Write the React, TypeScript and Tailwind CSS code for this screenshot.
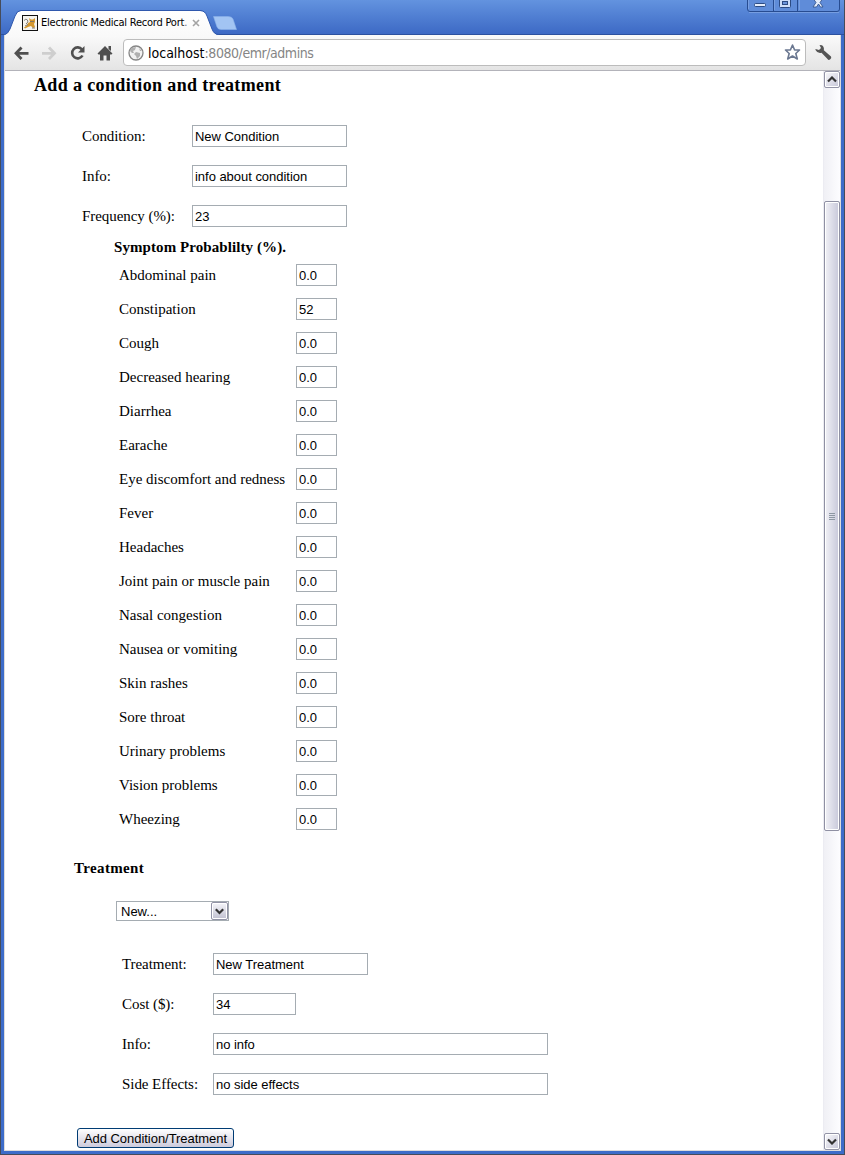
import React from "react";

const symptoms: [string, string][] = [
  ["Abdominal pain", "0.0"],
  ["Constipation", "52"],
  ["Cough", "0.0"],
  ["Decreased hearing", "0.0"],
  ["Diarrhea", "0.0"],
  ["Earache", "0.0"],
  ["Eye discomfort and redness", "0.0"],
  ["Fever", "0.0"],
  ["Headaches", "0.0"],
  ["Joint pain or muscle pain", "0.0"],
  ["Nasal congestion", "0.0"],
  ["Nausea or vomiting", "0.0"],
  ["Skin rashes", "0.0"],
  ["Sore throat", "0.0"],
  ["Urinary problems", "0.0"],
  ["Vision problems", "0.0"],
  ["Wheezing", "0.0"],
];

function Field({ value, width }: { value: string; width: string }) {
  return (
    <input
      defaultValue={value}
      className={`${width} block h-[22px] shrink-0 border border-[#a5acb2] bg-white px-[2px] pt-px font-['Liberation_Sans',sans-serif] text-[13px] leading-[18px] tracking-[-0.03px] text-black outline-none`}
    />
  );
}

function Row({ label, value, labelWidth, width }: { label: string; value: string; labelWidth: string; width: string }) {
  return (
    <label className="flex h-10 items-start">
      <span className={`${labelWidth} shrink-0 whitespace-nowrap leading-[22px] tracking-[-0.06px]`}>{label}</span>
      <Field value={value} width={width} />
    </label>
  );
}

function TabStrip() {
  return (
    <div className="relative h-[35px] shrink-0 bg-linear-to-b from-[#6393df] to-[#3c68c4] shadow-[inset_0_-1px_0_#2c519f]">
      <svg className="absolute -left-px top-0" width="245" height="36" viewBox="0 0 245 36">
        <defs>
          <linearGradient id="tab" x1="0" y1="0" x2="0" y2="1">
            <stop offset="0" stopColor="#ffffff" />
            <stop offset="1" stopColor="#f9f9f9" />
          </linearGradient>
        </defs>
        <path d="M4 36V35Q8 34 10 29L15 16Q17 11 21 11H200Q205 11 207 16L212 29Q214 35 219 35V36Z" fill="url(#tab)" />
        <path d="M4 35Q8 34 10 29L15 16Q17 10.500 21 10.500H200Q205 10.500 207 16L212 29Q214 34.500 219 34.500" fill="none" stroke="#2f58ad" strokeWidth="1" />
        <path d="M213.500 16.500H228Q232 16.500 233 19L236.500 29.500H221Q218 29.500 217 27Z" fill="#a2c4f3" stroke="#8bb2ea" strokeWidth=".6" />
      </svg>
      <div className="relative flex h-6 translate-y-[11px] items-center pl-[21px]">
        <svg width="16" height="16" viewBox="0 0 16 16" className="shrink-0">
          <rect x=".5" y=".5" width="15" height="15" fill="#f6f4ee" stroke="#111" />
          <path d="M7 3L9 4.500H11L13 3V7L12 9L13 12L11 13L9 11L6 12L3 13.500L2 12.500L5 10.500L6 8L8 7Z" fill="#d5982f" />
          <path d="M2 5.500Q4 3 5.500 5T4 9M3 11L6 9.500M10 13H13M8 6.500H12" fill="none" stroke="#77716a" strokeWidth=".9" />
        </svg>
        <span className="ml-[3px] w-[147px] overflow-hidden whitespace-nowrap pt-px font-['DejaVu_Sans_Condensed','DejaVu_Sans',sans-serif] text-[11px] tracking-[-0.22px] text-black [font-stretch:condensed]">
          Electronic Medical Record Port<span className="text-gray-500">.</span>
        </span>
        <svg className="ml-[4px]" width="8" height="8" viewBox="0 0 8 8">
          <path d="M1 1L7 7M7 1L1 7" stroke="#a4a4a4" strokeWidth="1.600" />
        </svg>
      </div>
      <svg className="absolute -right-px top-0" width="98" height="13" viewBox="0 0 98 13">
        <path d="M.5 0V9Q.5 11.500 3 11.500H90Q92.500 11.500 92.500 9V0" fill="#5f8cd9" stroke="#274c91" />
        <path d="M1.500 0V9M27.500 0V10M52.500 0V10M2 12.500H92" stroke="#85a9e5" strokeWidth=".7" />
        <path d="M26.500 0V11M50.500 0V11" stroke="#274c91" />
        <rect x="7.500" y="3.500" width="11" height="3" rx="1" fill="#e3ecfb" stroke="#2c4b83" />
        <rect x="32.500" y="-2.500" width="11" height="10" rx="1" fill="#cfdffa" stroke="#2c4b83" />
        <rect x="35.500" y="1.500" width="5" height="3" fill="#6c95dc" stroke="#2c4b83" />
        <path d="M67.500 -1L70 2.500L67 7H70.500L72.500 4L74.500 7H77L74 2.500L76.500 -1Z" fill="#e3ecfb" stroke="#2c4b83" strokeWidth=".8" transform="translate(-1 0)" />
      </svg>
    </div>
  );
}

function Toolbar() {
  return (
    <div className="flex h-9 shrink-0 items-center border-b border-[#b3b3ba] bg-linear-to-b from-[#fafafa] to-[#e4e4e4] pl-2">
      <svg width="105" height="24" viewBox="0 0 105 24" className="shrink-0">
        <path d="M15.500 12.300H4M8.500 6.500L3 12.300L8.500 18" fill="none" stroke="#4f4f4f" strokeWidth="2.800" />
        <path d="M29 12.300H40M36 6.500L41.500 12.300L36 18" fill="none" stroke="#cecece" strokeWidth="2.800" />
        <path d="M69 8.500A5.500 5.500 0 1 0 69.500 14.500" fill="none" stroke="#4f4f4f" strokeWidth="2.600" />
        <path d="M71.500 5V11.500H65Z" fill="#4f4f4f" />
        <path d="M84.500 12.500L92 5L99.500 12.500L98.500 13.500H97V19.500H93.500V14.500H90.500V19.500H87V13.500H85.500ZM95.500 5H98V10L95.500 8Z" fill="#4f4f4f" />
      </svg>
      <div className="ml-[5px] flex h-[27px] w-[683px] shrink-0 items-center rounded-[4px] border border-[#bcbcbc] bg-white pl-[4px] pr-[4px]">
        <svg width="16" height="16" viewBox="0 0 16 16" className="shrink-0">
          <circle cx="8" cy="8" r="7" fill="#f2f2f2" stroke="#858585" strokeWidth="1.300" />
          <path d="M3 3L8 2L7 5L5 6L6 8L4 8L2 6ZM8 7L12 8L12 11L9 14L8 11L6 9ZM11 3L14 6L12 6Z" fill="#b0b0b0" />
        </svg>
        <span className="ml-[4px] whitespace-nowrap font-['DejaVu_Sans_Condensed','DejaVu_Sans',sans-serif] text-[14px] leading-5 tracking-[-0.45px] text-[#858585] [font-stretch:condensed]">
          <span className="tracking-[0px] text-black">localhost</span>:8080/emr/admins
        </span>
        <svg width="17" height="17" viewBox="0 0 17 17" className="ml-auto">
          <path d="M8.500 1L10.600 6H15.500L11.800 9.500L13.300 15L8.500 12L3.700 15L5.200 9.500L1.500 6H6.400Z" fill="#fff" stroke="#6b7891" strokeWidth="1.600" strokeLinejoin="round" />
        </svg>
      </div>
      <svg className="ml-[9px] shrink-0" width="17" height="17" viewBox="0 0 17 17">
        <path d="M4.500 1L7 1.200Q9.500 3 8.800 6.200L16 12.500Q17 14 15 15.500Q13.500 16.500 12.500 15L6.500 8.800Q2.500 9.800 .5 6V5L4 6L6 4Z" fill="#555" />
      </svg>
    </div>
  );
}

function Arrow({ up }: { up?: boolean }) {
  return (
    <div className="flex h-[17px] w-4 shrink-0 items-center justify-center rounded-[2px] border border-[#9293a6] bg-linear-to-br from-[#fafafc] to-[#c6c6d8] shadow-[inset_0_0_0_1px_#fff]">
      <svg width="10" height="7" viewBox="0 0 10 7">
        <path d={up ? "M1 5.500L5 1.500L9 5.500" : "M1 1.500L5 5.500L9 1.500"} fill="none" stroke="#333" strokeWidth="2.200" />
      </svg>
    </div>
  );
}

function Scrollbar() {
  return (
    <div className="flex w-[17px] shrink-0 flex-col items-center border-l border-[#ececf2] bg-linear-to-r from-[#f0f0f5] to-[#fdfdff]">
      <Arrow up />
      <div className="h-[113px]" />
      <div className="flex h-[630px] w-4 shrink-0 flex-col items-center justify-center gap-px rounded-[2px] border border-[#8f90a3] bg-linear-to-r from-[#f1f1f6] to-[#c8c8da] shadow-[inset_0_0_0_1px_#fff]">
        <i className="h-px w-[6px] bg-[#8e98a3]" />
        <i className="h-px w-[6px] bg-[#8e98a3]" />
        <i className="h-px w-[6px] bg-[#8e98a3]" />
        <i className="h-px w-[6px] bg-[#8e98a3]" />
      </div>
      <div className="grow" />
      <Arrow />
    </div>
  );
}

export default function App() {
  return (
    <div className="flex h-[1155px] w-[845px] flex-col overflow-hidden border-x border-b border-[#464c5a] bg-[#3d6cc9]">
      <TabStrip />
      <div className="mx-[3px] mb-[3px] flex min-h-0 grow flex-col border-x border-b border-[#dcdcdc] bg-white">
        <Toolbar />
        <div className="flex min-h-0 grow">
          <main className="min-w-0 grow overflow-hidden font-['Liberation_Serif',serif] text-[15px] text-black">
            <h2 className="ml-[29px] mt-[2px] text-[18px] font-bold leading-6 tracking-[0.36px]">Add a condition and treatment</h2>
            <section className="ml-[77px] mt-[28px]">
              <Row label="Condition:" value="New Condition" labelWidth="w-[110px]" width="w-[155px]" />
              <Row label="Info:" value="info about condition" labelWidth="w-[110px]" width="w-[155px]" />
              <Row label="Frequency (%):" value="23" labelWidth="w-[110px]" width="w-[155px]" />
            </section>
            <h3 className="-mt-2 ml-[109px] h-[27px] text-[15px] font-bold leading-5 tracking-[0.08px]">Symptom Probablilty (%).</h3>
            <section className="ml-[114px]">
              {symptoms.map(([name, value]) => (
                <label key={name} className="flex h-[34px] items-start">
                  <span className="w-[177px] shrink-0 whitespace-nowrap leading-[22px]">{name}</span>
                  <Field value={value} width="w-[41px]" />
                </label>
              ))}
            </section>
            <h3 className="ml-[69px] mt-[16px] text-[15px] font-bold leading-5 tracking-[0.36px]">Treatment</h3>
            <div className="ml-[111px] mt-[23px] flex h-5 w-[113px] items-center justify-between border border-[#a5acb2] pl-[4px] font-['Liberation_Sans',sans-serif] text-[13px]">
              <span className="pt-px">New...</span>
              <span className="flex h-[18px] w-[17px] items-center justify-center rounded-[2px] border border-[#9293a6] bg-linear-to-b from-[#f6f6fa] to-[#c0c0d0] shadow-[inset_0_0_0_1px_#fff]">
                <svg width="9" height="7" viewBox="0 0 9 7">
                  <path d="M.8 1.200L4.500 5L8.200 1.200" fill="none" stroke="#333" strokeWidth="2.200" />
                </svg>
              </span>
            </div>
            <section className="ml-[117px] mt-[32px]">
              <Row label="Treatment:" value="New Treatment" labelWidth="w-[91px]" width="w-[155px]" />
              <Row label="Cost ($):" value="34" labelWidth="w-[91px]" width="w-[83px]" />
              <Row label="Info:" value="no info" labelWidth="w-[91px]" width="w-[335px]" />
              <Row label="Side Effects:" value="no side effects" labelWidth="w-[91px]" width="w-[335px]" />
            </section>
            <button className="ml-[72px] mt-[15px] block h-5 w-[157px] whitespace-nowrap rounded-[3px] border border-[#003c74] bg-linear-to-b from-white to-[#cdcbdc] pt-px font-['Liberation_Sans',sans-serif] text-[13px] leading-[17px] tracking-[-0.04px]">
              Add Condition/Treatment
            </button>
          </main>
          <Scrollbar />
        </div>
      </div>
    </div>
  );
}
